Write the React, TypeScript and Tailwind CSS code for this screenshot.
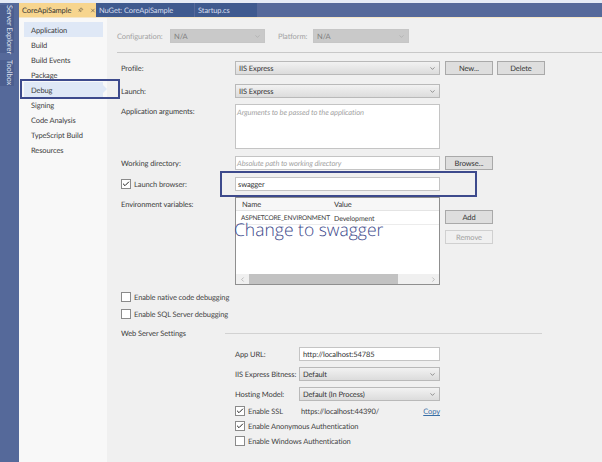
import { ChevronDown, ChevronLeft, ChevronRight, Check, Pin, X } from "lucide-react";
import type { ReactNode } from "react";

const navItems = [
  "Application",
  "Build",
  "Build Events",
  "Package",
  "Debug",
  "Signing",
  "Code Analysis",
  "TypeScript Build",
  "Resources",
];

function Select({ value, disabled, className }: { value: string; disabled?: boolean; className: string }) {
  return (
    <div
      className={`flex h-[14px] shrink-0 items-center justify-between border pl-[3px] pr-[3px] ${
        disabled
          ? "border-[#c6c6c6] bg-[#c9c9c9] text-[#7d7d7d]"
          : "border-[#b9b9b9] bg-gradient-to-b from-[#f2f2f2] to-[#dcdcdc] text-[#333]"
      } ${className}`}
    >
      <span className="h-[12px] leading-[14px]">{value}</span>
      <ChevronDown size={7} strokeWidth={2} className={disabled ? "text-[#a5a5a5]" : "text-[#555]"} />
    </div>
  );
}

function TextBox({ children, className, placeholder }: { children: ReactNode; className: string; placeholder?: boolean }) {
  return (
    <div
      className={`flex h-[14px] shrink-0 items-center border border-[#c4c4c4] bg-white px-[1px] ${
        placeholder ? "italic text-[#a3a3a3]" : "text-[#333]"
      } ${className}`}
    >
      <span className="h-[12px] leading-[14px]">{children}</span>
    </div>
  );
}

function Btn({ label, disabled }: { label: string; disabled?: boolean }) {
  return (
    <div
      className={`flex h-[14px] w-[48px] items-center justify-center border ${
        disabled ? "border-[#d0d0d0] text-[#a0a0a0]" : "border-[#a9a9a9] bg-[#dedede] text-[#333]"
      }`}
    >
      <span className="h-[12px] leading-[14px]">{label}</span>
    </div>
  );
}

function CheckRow({ label, checked, className }: { label: string; checked?: boolean; className?: string }) {
  return (
    <div className={`flex items-center gap-[3px] whitespace-nowrap text-[#444] ${className ?? ""}`}>
      <span className="flex h-[10px] w-[10px] items-center justify-center border border-[#8a8a8a] bg-white">
        {checked && <Check size={8} strokeWidth={3} className="text-[#222]" />}
      </span>
      <span className="h-[14px] leading-[16px]">{label}</span>
    </div>
  );
}

function Row({ label, top, children }: { label?: ReactNode; top: string; children: ReactNode }) {
  return (
    <div className={`flex ${top}`}>
      <div className="h-[14px] w-[128px] shrink-0 whitespace-nowrap pl-[14px] leading-[16px]">{label}</div>
      {children}
    </div>
  );
}

export default function App() {
  return (
    <div className="relative flex h-[462px] w-[602px] flex-col overflow-hidden bg-[#f0f0f0] font-['Lato','Liberation_Sans',sans-serif] text-[7.5px] leading-[14px] tracking-[-0.1px] text-[#3c3c3c] [text-rendering:geometricPrecision]">
      <div className="h-[3px] shrink-0 bg-[#e6ebf5]" />
      <div className="flex min-h-0 flex-1">
        {/* tool window strip */}
        <div className="flex w-[19px] shrink-0 flex-col gap-[7px] bg-[#55699a] pt-[2px] text-[#dfe4f0]">
          <div className="flex h-[48px] w-[14px] items-center justify-center whitespace-nowrap bg-[#4c5f90] pl-[3px] text-[7.5px] leading-[10px] [writing-mode:vertical-rl]">
            Server Explorer
          </div>
          <div className="flex h-[26px] w-[14px] items-center justify-center whitespace-nowrap bg-[#4c5f90] pl-[3px] text-[7.5px] leading-[10px] [writing-mode:vertical-rl]">
            Toolbox
          </div>
        </div>

        <div className="flex min-w-0 flex-1 flex-col">
          {/* tabs */}
          <div className="flex h-[15px] shrink-0 items-center whitespace-nowrap border-b border-[#f5e6c8] bg-[#56699a] text-[#d7deee]">
            <div className="flex h-full w-[77px] items-center gap-[7px] bg-[#f7d58e] pl-[3px] text-[#333]">
              <span className="h-[14px] leading-[16px]">CoreApiSample</span>
              <Pin size={6} className="rotate-45" />
              <X size={7} strokeWidth={2} />
            </div>
            <div className="flex h-full w-[98px] items-center bg-[#3f5a8f] pl-[3px]">
              <span className="h-[14px] leading-[16px]">NuGet: CoreApiSample</span>
            </div>
            <div className="ml-[1px] flex h-full w-[62px] items-center bg-[#3f5a8f] pl-[3px]">
              <span className="h-[14px] leading-[16px]">Startup.cs</span>
            </div>
          </div>

          <div className="flex min-h-0 flex-1">
            {/* left nav */}
            <div className="flex w-[88px] shrink-0 flex-col bg-[#f8f8f8] pl-[5px] pr-[4px] pt-[4px]">
              {navItems.map((item) => (
                <div
                  key={item}
                  className={`relative h-[15px] pl-[7px] leading-[18px] ${
                    item === "Application" || item === "Debug" ? "bg-[#dfe8f6]" : ""
                  }`}
                >
                  {item}
                  {item === "Debug" && (
                    <span className="absolute right-[-4px] top-[3px] border-y-[4px] border-l-[4px] border-y-transparent border-l-[#dfe8f6]" />
                  )}
                </div>
              ))}
            </div>

            {/* property page */}
            <div className="min-w-0 flex-1">
              <div className="ml-[10px] h-[35px] border-b border-[#c8c8c8] pt-[11px] text-[#a2a2a2]">
                <div className="flex items-center whitespace-nowrap">
                  <span className="h-[14px] w-[53px] shrink-0 leading-[16px]">Configuration:</span>
                  <Select value="N/A" disabled className="w-[95px]" />
                  <span className="ml-[13px] h-[14px] w-[35px] shrink-0 leading-[16px]">Platform:</span>
                  <Select value="N/A" disabled className="w-[96px]" />
                </div>
              </div>

              <Row label="Profile:" top="mt-[8px]">
                <Select value="IIS Express" className="w-[205px]" />
                <div className="ml-[5px] flex gap-[4px]">
                  <Btn label="New..." />
                  <Btn label="Delete" />
                </div>
              </Row>
              <Row label="Launch:" top="mt-[9px]">
                <Select value="IIS Express" className="w-[205px]" />
              </Row>
              <Row label="Application arguments:" top="mt-[6px]">
                <div className="h-[45px] w-[205px] border border-[#c4c4c4] bg-white px-[1px] italic leading-[15px] text-[#a3a3a3]">
                  Arguments to be passed to the application
                </div>
              </Row>
              <Row label="Working directory:" top="mt-[7px]">
                <TextBox placeholder className="w-[205px]">Absolute path to working directory</TextBox>
                <div className="ml-[5px]">
                  <Btn label="Browse..." />
                </div>
              </Row>
              <Row label={<CheckRow label="Launch browser:" checked />} top="mt-[7px]">
                <TextBox className="w-[205px] pl-[2px]">swagger</TextBox>
              </Row>
              <Row label="Environment variables:" top="mt-[6px]">
                <div className="flex h-[88px] w-[205px] flex-col border border-[#8f8f8f] bg-white">
                  <div className="flex h-[13px] border-b border-[#e4e4e4] bg-[#f7f7f7]">
                    <span className="w-[92px] pl-[6px]">Name</span>
                    <span className="pl-[6px]">Value</span>
                  </div>
                  <div className="flex h-[14px] items-center whitespace-nowrap border-b border-[#ececec] pt-[2px] leading-[10px]">
                    <span className="w-[92px] pl-[5px] text-[6.5px] tracking-[-0.15px]">ASPNETCORE_ENVIRONMENT</span>
                    <span className="pl-[6px] text-[7px]">Development</span>
                  </div>
                  <div className="mt-auto flex h-[10px] items-center bg-[#f0f0f0] text-[#999]">
                    <ChevronLeft size={7} className="mx-[3px]" />
                    <div className="h-full flex-1 bg-[#c2c2c2]" />
                    <div className="w-[30px]" />
                    <ChevronRight size={7} className="mx-[2px]" />
                  </div>
                </div>
                <div className="ml-[5px] mt-[13px] flex flex-col gap-[6px]">
                  <Btn label="Add" />
                  <Btn label="Remove" disabled />
                </div>
              </Row>

              <CheckRow label="Enable native code debugging" className="ml-[14px] mt-[5px]" />
              <CheckRow label="Enable SQL Server debugging" className="ml-[14px] mt-[3px]" />

              <div className="ml-[14px] mt-[5px] flex h-[14px] items-center whitespace-nowrap">
                <span className="h-[14px] w-[104px] leading-[16px]">Web Server Settings</span>
                <div className="h-px w-[317px] bg-[#d2d2d2]" />
              </div>

              <div className="ml-[128px] mt-[7px] flex flex-col whitespace-nowrap">
                <div className="flex items-center">
                  <span className="h-[14px] w-[64px] shrink-0 leading-[16px]">App URL:</span>
                  <TextBox className="w-[141px] pl-[3px]">http://localhost:54785</TextBox>
                </div>
                <div className="mt-[6px] flex items-center">
                  <span className="h-[14px] w-[64px] shrink-0 leading-[16px]">IIS Express Bitness:</span>
                  <Select value="Default" className="w-[141px]" />
                </div>
                <div className="mt-[6px] flex items-center">
                  <span className="h-[14px] w-[64px] shrink-0 leading-[16px]">Hosting Model:</span>
                  <Select value="Default (In Process)" className="w-[141px]" />
                </div>
                <div className="mt-[3px] flex w-[205px] items-center">
                  <CheckRow label="Enable SSL" checked className="w-[66px]" />
                  <span className="h-[14px] leading-[16px]">https://localhost:44390/</span>
                  <span className="ml-auto h-[14px] leading-[16px] text-[#3a6ea5] underline">Copy</span>
                </div>
                <CheckRow label="Enable Anonymous Authentication" checked className="mt-[1px]" />
                <CheckRow label="Enable Windows Authentication" className="mt-[1px]" />
              </div>
            </div>
          </div>
        </div>
      </div>

      {/* annotations drawn over the page */}
      <div className="absolute left-[20px] top-[79px] h-[20px] w-[100px] border-2 border-[#3d4a8c]" />
      <div className="absolute left-[220px] top-[171px] h-[26px] w-[257px] border-2 border-[#3d4a8c]" />
      <div className="absolute left-[234px] top-[221px] font-['Open_Sans','Liberation_Sans',sans-serif] text-[17.5px] font-light leading-[18px] tracking-normal text-[#3d4a8c]">
        Change to swagger
      </div>
    </div>
  );
}
